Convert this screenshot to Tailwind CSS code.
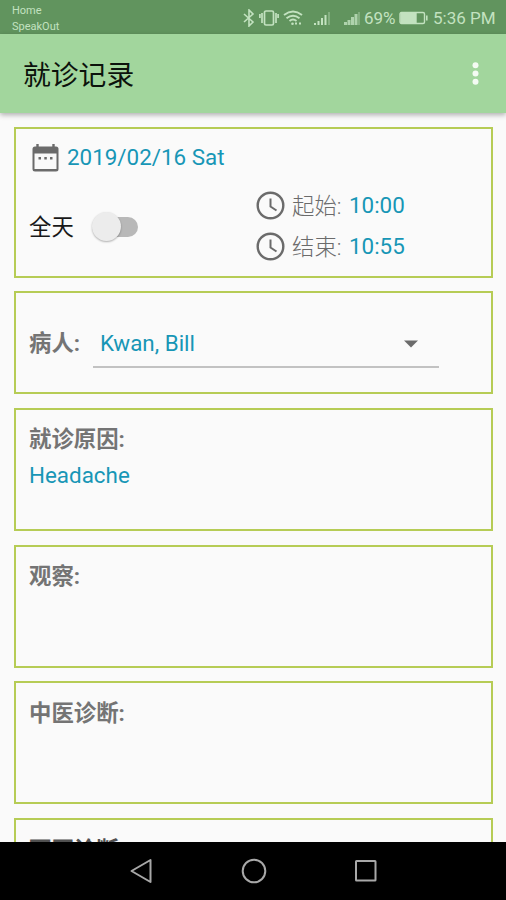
<!DOCTYPE html>
<html lang="zh-CN">
<head>
<meta charset="utf-8">
<title>就诊记录</title>
<script src="https://cdn.jsdelivr.net/npm/@tailwindcss/browser@4"></script>
</head>
<body class="bg-[#fafafa]">
<div class="w-[506px] h-[900px] overflow-hidden flex flex-col bg-[#fafafa] font-[Roboto,'Noto_Sans_CJK_SC',sans-serif] text-[22.4px] leading-7 text-[#6b6b6b]">
  <div class="h-[34px] shrink-0 bg-[#61945e] text-[#c3e2c0] flex justify-between pl-3 pr-[12px]">
    <div class="text-[11px] leading-4 pt-[3px]"><div>Home</div><div>SpeakOut</div></div>
    <div class="flex items-center h-[36px] text-[17px] whitespace-nowrap">
      <svg class="w-[12px] h-[18px]" viewBox="0 0 12 18" fill="none" stroke="currentColor" stroke-width="1.6"><path d="M1 5l9 8-4 4V1l4 4-9 8"/></svg>
      <svg class="w-[20px] h-[18px] ml-[4px]" viewBox="0 0 20 18" fill="none" stroke="currentColor" stroke-width="1.7"><rect x="5.5" y="2" width="9" height="14" rx="1.5"/><path d="M3 4v10M17 4v10M.9 5v4M19.100 5v4"/></svg>
      <svg class="w-[20px] h-[18px] ml-[4px]" viewBox="0 0 20 18" fill="none" stroke="currentColor" stroke-width="1.9"><path d="M1 6q9-7 18 0M3.500 9.200q6.500-5 13 0M6.500 12q3.500-2.800 7 0"/><circle cx="9.500" cy="14.800" r="1.3" fill="currentColor" stroke="none"/><path d="M12 14.500h2M16 14.500h2"/></svg>
      <svg class="w-[17px] h-[16px] ml-[11px]" viewBox="0 0 17 16" fill="currentColor"><path d="M0 13h2v2H0zM3.500 11h2v4h-2zM7 8h2v7H7zM10.500 5h2v10h-2z"/><path opacity=".35" d="M14 2h2v13h-2z"/></svg>
      <svg class="w-[17px] h-[16px] ml-[13px]" viewBox="0 0 17 16" fill="currentColor"><path opacity=".8" d="M0 12h3v3H0zM3.500 10h3v5h-3zM7 7h3v8H7zM10.500 4h3v11h-3z"/><path opacity=".35" d="M14 2h2v13h-2z"/></svg>
      <span class="ml-[3px] w-[32px]">69%</span>
      <svg class="w-[29px] h-[14px] ml-[3px]" viewBox="0 0 29 14" fill="none" stroke="currentColor" stroke-width="1.4"><rect x="1" y="1.500" width="24.500" height="11" rx="1.500"/><path d="M27.800 4.500v5" stroke-width="1.600"/><path d="M2 2.500h15v9H2z" fill="currentColor"/></svg>
      <span class="ml-[5px] w-[61px]">5:36 PM</span>
    </div>
  </div>
  <header class="relative h-[79px] shrink-0 bg-[#a2d69d] shadow-[0_2px_5px_rgba(0,0,0,0.3)] flex items-center justify-between pl-[23px] pr-[27px]">
    <h1 class="text-[27.8px] leading-9 text-[#0c120c] pt-[5px]">就诊记录</h1>
    <svg class="w-[7px] h-[23px]" viewBox="0 0 7 23" fill="#f4fbf3"><circle cx="3.500" cy="3.300" r="3"/><circle cx="3.500" cy="11.500" r="3"/><circle cx="3.500" cy="19.700" r="3"/></svg>
  </header>
  <main class="flex-1 min-h-0 overflow-hidden pl-[14px] pr-[13px] pt-[14px] flex flex-col gap-[14px]">
    <section class="h-[151px] shrink-0 border-2 border-[#b6cc55] pl-[13px] pt-[15px]">
      <div class="flex items-center h-[28px] text-[#1796b6]">
        <svg class="w-[29px] h-[30px] ml-[2px] mr-[7px]" viewBox="0 0 29 30" fill="none"><path d="M4 3.500h21q2.500 0 2.500 2.500v20q0 2.500-2.500 2.500H4q-2.500 0-2.500-2.500V6Q1.500 3.500 4 3.500z" fill="#6b6b6b"/><path d="M3.500 10.500h22v15.500H3.500z" fill="#fafafa"/><path d="M6.500 1v4M22.500 1v4" stroke="#6b6b6b" stroke-width="2.400"/><path d="M7.500 14h2.500v2.500H7.500zM13.300 14h2.500v2.500h-2.500zM19 14h2.500v2.500H19z" fill="#6b6b6b"/></svg>
        <span class="pb-[2px]">2019/02/16 Sat</span>
      </div>
      <div class="flex mt-[14px]">
        <div class="w-[227px] flex items-center h-[81px]">
          <span class="text-[#181818] w-[63px] pt-px">全天</span>
          <div class="relative w-[46px] h-[30px] flex items-center justify-end"><div class="w-[38px] h-[20px] rounded-full bg-[#b8b8b8]"></div><div class="absolute left-0 top-0 size-[29px] rounded-full bg-[#ececec] shadow-[0_1px_2px_rgba(0,0,0,0.3)]"></div></div>
        </div>
        <div class="flex flex-col gap-[13px] pt-[6px]">
          <div class="flex items-center h-7"><svg class="size-[29px] mr-[7px] -mt-px" viewBox="0 0 29 29" fill="none" stroke="#6b6b6b" stroke-width="2.400"><circle cx="14.500" cy="14.500" r="12.800"/><path d="M14.500 7.500v8l6 4" stroke-width="2"/></svg><span class="w-[57px] pb-px font-light">起始:</span><span class="text-[#1796b6] pb-[2px]">10:00</span></div>
          <div class="flex items-center h-7"><svg class="size-[29px] mr-[7px] -mt-px" viewBox="0 0 29 29" fill="none" stroke="#6b6b6b" stroke-width="2.400"><circle cx="14.500" cy="14.500" r="12.800"/><path d="M14.500 7.500v8l6 4" stroke-width="2"/></svg><span class="w-[57px] pb-px font-light">结束:</span><span class="text-[#1796b6] pb-[2px]">10:55</span></div>
        </div>
      </div>
    </section>
    <section class="h-[103px] -mt-px shrink-0 border-2 border-[#b6cc55] pl-[13px] pt-[25px] flex items-start">
      <span class="font-bold text-[#747474] w-[64px] pt-[11px]">病人:</span>
      <div class="w-[346px] h-[50px] border-b-2 border-[#c2c2c2] pl-[7px] pr-[21px] pt-[11px] flex justify-between">
        <span class="text-[#1796b6]">Kwan, Bill</span>
        <svg class="w-[14px] h-[8px] mt-[11px]" viewBox="0 0 14 8" fill="#6b6b6b"><path d="M0 .5h14L7 7.500z"/></svg>
      </div>
    </section>
    <section class="h-[123px] shrink-0 border-2 border-[#b6cc55] pl-[13px] pt-[15px]">
      <div class="font-bold text-[#747474]">就诊原因:</div>
      <div class="text-[#1796b6] mt-[8px]">Headache</div>
    </section>
    <section class="h-[123px] shrink-0 border-2 border-[#b6cc55] pl-[13px] pt-[15px]"><div class="font-bold text-[#747474]">观察:</div></section>
    <section class="h-[123px] -mt-px shrink-0 border-2 border-[#b6cc55] pl-[13px] pt-[16px]"><div class="font-bold text-[#747474]">中医诊断:</div></section>
    <section class="h-[123px] shrink-0 border-2 border-[#b6cc55] pl-[13px] pt-[16px]"><div class="font-bold text-[#505050]">西医诊断:</div></section>
  </main>
  <nav class="h-[58px] shrink-0 bg-black flex items-center justify-between pl-[130px] pr-[128px]">
    <svg class="w-[23px] h-[26px]" viewBox="0 0 23 26" fill="none" stroke="#a8a8a8" stroke-width="2" stroke-linejoin="round"><path d="M1.500 13L20.500 2v22z"/></svg>
    <svg class="size-[26px]" viewBox="0 0 26 26" fill="none" stroke="#a8a8a8" stroke-width="2"><circle cx="13" cy="13" r="11.300"/></svg>
    <svg class="size-[24px]" viewBox="0 0 24 24" fill="none" stroke="#a8a8a8" stroke-width="2"><rect x="2" y="2" width="19.500" height="19.500" rx=".5"/></svg>
  </nav>
</div>
</body>
</html>
